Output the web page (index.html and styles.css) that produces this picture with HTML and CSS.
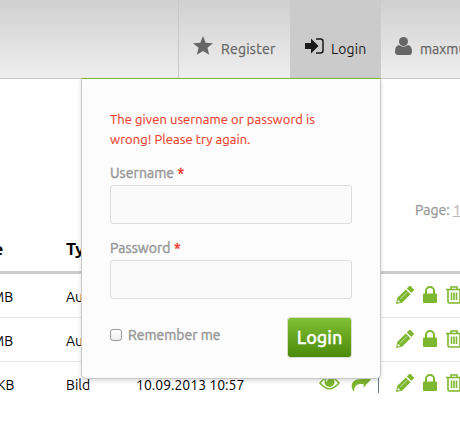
FILE: index.html
```
<!DOCTYPE html>
<html lang="en">
<head>
<meta charset="utf-8">
<title>Login</title>
<link rel="stylesheet" href="styles.css">
</head>
<body>
<svg class="defs" width="0" height="0">
  <symbol id="eye" viewBox="0 0 21 16"><path d="M1 8Q10.500-3.500 20 8Q10.500 19.500 1 8Z" fill="none" stroke="currentColor" stroke-width="1.500"/><circle cx="10.500" cy="7" r="5" fill="currentColor"/><path d="M7.500 6.500a3 3 0 0 1 3-3" fill="none" stroke="#fff" stroke-width="1.200"/></symbol>
  <symbol id="share" viewBox="0 0 21 18"><path d="M12 0l9 3.500-7.500 8V8C6 7.500 4.500 10 4 15.500 1.500 14-2 3 12 3Z" fill="currentColor"/></symbol>
  <symbol id="pencil" viewBox="0 0 18 18"><path d="M0 18l1.200-6L9.800 3.400l4.800 4.800L6 16.800ZM10.700 2.500L13.200 0q.7-.5 1.400 0l3.100 3.200q.6.700 0 1.400l-2.300 2.500Z" fill="currentColor"/><path d="M4 13.400l7.200-7.200" stroke="#fff" stroke-width=".6"/><path d="M1.900 13.800l2.300 2.300-1.800.5-1-1Z" fill="#fff"/></symbol>
  <symbol id="lock" viewBox="0 0 14 17"><path d="M3 8V5a4 4 0 0 1 8 0v3" fill="none" stroke="currentColor" stroke-width="2"/><rect y="7.500" width="14" height="9.500" rx="1" fill="currentColor"/></symbol>
  <symbol id="trash" viewBox="0 0 16 18"><path d="M0 3.500h16M5 3V1h6v2M2 3.500v12q0 1.500 1.500 1.500h9q1.500 0 1.500-1.500v-12M5.500 6.500v7.500M8 6.500v7.500M10.500 6.500v7.500" fill="none" stroke="currentColor" stroke-width="1.600"/></symbol>
</svg>
<header class="bar">
  <nav class="nav">
    <a class="tab register">
      <svg class="star" viewBox="0 0 20 19"><path d="M10 0l2.700 6.700 7.300.5-5.600 4.600 1.800 7L10 15l-6.200 3.800 1.800-7L0 7.200l7.300-.5Z" fill="currentColor"/></svg>
      <span>Register</span>
    </a>
    <a class="tab login active">
      <svg class="enter" viewBox="0 0 19 16"><path d="M0 5h6V.5L13.500 8 6 15.500V11H0Z" fill="currentColor"/><path d="M11 1h4.500Q18 1 18 3.500v9q0 2.500-2.500 2.500H11" fill="none" stroke="currentColor" stroke-width="1.500"/></svg>
      <span>Login</span>
    </a>
    <a class="tab user">
      <svg class="person" viewBox="0 0 17 18"><circle cx="8.500" cy="4.500" r="4.500" fill="currentColor"/><path d="M4 8q4.500 3.600 9 0 4 .8 4 6.500 0 3.500-3 3.500H3q-3 0-3-3.500Q0 8.800 4 8Z" fill="currentColor"/></svg>
      <span>maxmuster</span>
    </a>
  </nav>
  <form class="popup">
    <p class="error">The given username or password is<br>wrong! Please try again.</p>
    <label class="label">Username <b>*</b></label>
    <input class="field" type="text">
    <label class="label">Password <b>*</b></label>
    <input class="field" type="password">
    <div class="actions">
      <label class="remember"><i class="check"></i><span>Remember me</span></label>
      <button class="submit" type="button">Login</button>
    </div>
  </form>
</header>
<main class="content">
  <div class="pager">Page: <a>1</a></div>
  <div class="table">
    <div class="row head"><span class="size head-size">Size</span><span>Type</span></div>
    <div class="row"><span class="size">MB</span><span>Audio</span><span></span><span class="tools"><svg class="pencil"><use href="#pencil"/></svg><svg class="lock"><use href="#lock"/></svg><svg class="trash"><use href="#trash"/></svg></span></div>
    <div class="row"><span class="size">MB</span><span>Audio</span><span></span><span class="tools"><svg class="pencil"><use href="#pencil"/></svg><svg class="lock"><use href="#lock"/></svg><svg class="trash"><use href="#trash"/></svg></span></div>
    <div class="row last"><span class="size kb">KB</span><span>Bild</span><span class="date">10.09.2013 10:57</span><span class="tools"><svg class="eye"><use href="#eye"/></svg><svg class="share"><use href="#share"/></svg><i class="sep"></i><svg class="pencil"><use href="#pencil"/></svg><svg class="lock"><use href="#lock"/></svg><svg class="trash"><use href="#trash"/></svg></span></div>
  </div>
</main>
</body>
</html>
```
FILE: styles.css
```
* { box-sizing: border-box; }
body {
  margin: 0;
  width: 460px;
  height: 432px;
  overflow: hidden;
  background: #fff;
  color: #000;
  font: 14px/20px Ubuntu, "Noto Sans", sans-serif;
}
svg { display: block; flex: none; }
.defs { position: absolute; }
.bar {
  position: relative;
  height: 79px;
  border-bottom: 1px solid #c8c8c8;
  background: linear-gradient(#d0d0d0, #eee);
}
.nav { display: flex; height: 78px; margin-left: 178px; overflow: hidden; }
.tab {
  display: flex;
  flex: none;
  align-items: flex-start;
  color: #666;
  -webkit-text-stroke: .25px;
  letter-spacing: .25px;
}
.tab span { margin-top: 39px; }
.register { width: 112px; border-left: 1px solid #c8c8c8; padding-left: 14px; }
.login { width: 91px; padding-left: 15px; }
.user { width: 130px; padding-left: 14px; letter-spacing: 0; }
.active { background: #cbcbcb; color: #1a1a1a; -webkit-text-stroke: 0; letter-spacing: .15px; }
.star { width: 20px; height: 19px; margin: 36px 8px 0 0; }
.enter { width: 19px; height: 16px; margin: 38px 7px 0 0; }
.person { width: 17px; height: 18px; margin: 37px 8px 0 0; }
.popup {
  position: absolute;
  z-index: 2;
  left: 81px;
  top: 78px;
  width: 300px;
  height: 301px;
  padding: 30px 28px 0;
  background: #fcfcfc;
  border: 1px solid #c8c8c8;
  border-top-color: #7db72f;
  border-radius: 0 0 5px 5px;
  box-shadow: 0 2px 4px rgba(0, 0, 0, .14);
}
.error { margin: 0 0 14px; font-size: 13px; color: #ee3f2f; white-space: nowrap; letter-spacing: .06px; -webkit-text-stroke: .15px; }
.label {
  display: block;
  height: 22px;
  color: #999;
  -webkit-text-stroke: .45px;
  letter-spacing: .06px;
}
.label b { color: #ee3f2f; font-weight: 400; }
.field {
  display: block;
  width: 242px;
  height: 39px;
  margin: 0 0 14px;
  border: 1px solid #ddd;
  border-radius: 3px;
  background: #fafafa;
}
.actions { display: flex; justify-content: space-between; margin-top: 18px; }
.remember {
  display: flex;
  margin-top: 8px;
  color: #999;
  -webkit-text-stroke: .45px;
}
.check {
  width: 12px;
  height: 12px;
  margin: 4px 6px 0 0;
  border: 1px solid #999;
  border-radius: 3px;
  background: linear-gradient(#fff, #eee);
}
.submit {
  width: 65px;
  height: 41px;
  padding: 0 0 2px;
  border: 1px solid #d5dfc9;
  border-radius: 3px;
  background: linear-gradient(#80c034, #4b8a09) padding-box;
  color: #fff;
  font: 500 18px Ubuntu, "Noto Sans", sans-serif;
  -webkit-text-stroke: .3px;
}
.content { height: 314px; overflow: hidden; }
.pager { height: 151px; padding: 121px 0 0 415px; color: #999; white-space: nowrap; -webkit-text-stroke: .3px; }
.pager a { color: #bbb; text-decoration: underline; }
.row {
  display: grid;
  grid-template-columns: 66px 70px 183px 160px;
  height: 44px;
  padding-top: 13px;
  border-bottom: 1px solid #e8e8e8;
  font-size: 14px;
  white-space: nowrap;
}
.head { padding-top: 9px; border-bottom: 3px solid #ccc; font-size: 17px; font-weight: 700; }
.last { border: 0; }
.size { margin-left: -8px; }
.kb { margin-left: -3px; }
.head-size { margin-left: -29px; }
.tools { display: flex; justify-content: flex-end; color: #7db72f; padding-right: 17px; }
.eye { width: 21px; height: 16px; margin-right: 10px; }
.share { width: 21px; height: 18px; margin: 1px 7px 0 0; }
.sep { width: 1px; height: 20px; margin-right: 17px; background: #68798a; }
.pencil { width: 18px; height: 18px; margin: -1px 9px 0 0; }
.lock { width: 14px; height: 17px; margin: -1px 9px 0 0; }
.trash { width: 16px; height: 18px; margin-top: -1px; }
```
